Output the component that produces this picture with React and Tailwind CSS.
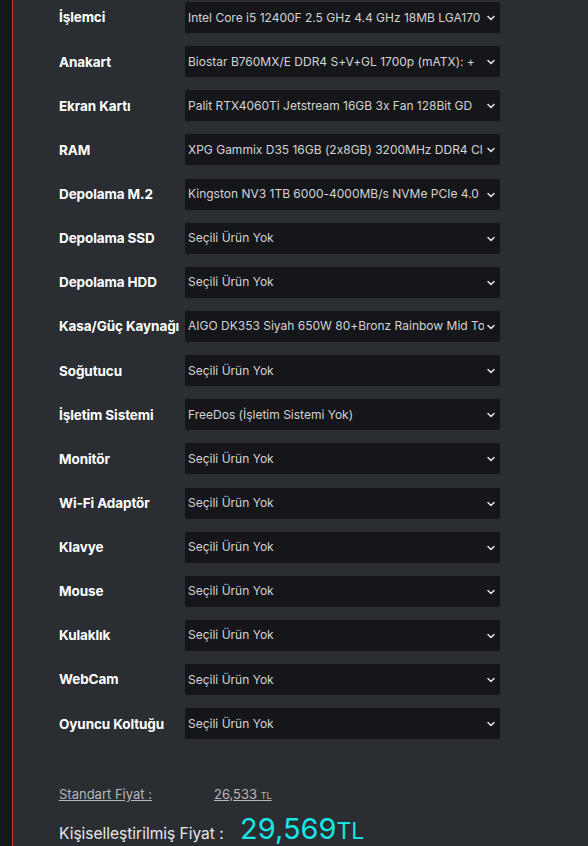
import React from 'react';
import { ChevronDown } from 'lucide-react';

const parts = [
  { label: 'İşlemci', value: 'Intel Core i5 12400F 2.5 GHz 4.4 GHz 18MB LGA170' },
  { label: 'Anakart', value: 'Biostar B760MX/E DDR4 S+V+GL 1700p (mATX): +' },
  { label: 'Ekran Kartı', value: 'Palit RTX4060Ti Jetstream 16GB 3x Fan 128Bit GD' },
  { label: 'RAM', value: 'XPG Gammix D35 16GB (2x8GB) 3200MHz DDR4 Cl' },
  { label: 'Depolama M.2', value: 'Kingston NV3 1TB 6000-4000MB/s NVMe PCIe 4.0' },
  { label: 'Depolama SSD', value: 'Seçili Ürün Yok' },
  { label: 'Depolama HDD', value: 'Seçili Ürün Yok' },
  { label: 'Kasa/Güç Kaynağı', value: 'AIGO DK353 Siyah 650W 80+Bronz Rainbow Mid To' },
  { label: 'Soğutucu', value: 'Seçili Ürün Yok' },
  { label: 'İşletim Sistemi', value: 'FreeDos (İşletim Sistemi Yok)' },
  { label: 'Monitör', value: 'Seçili Ürün Yok' },
  { label: 'Wi-Fi Adaptör', value: 'Seçili Ürün Yok' },
  { label: 'Klavye', value: 'Seçili Ürün Yok' },
  { label: 'Mouse', value: 'Seçili Ürün Yok' },
  { label: 'Kulaklık', value: 'Seçili Ürün Yok' },
  { label: 'WebCam', value: 'Seçili Ürün Yok' },
  { label: 'Oyuncu Koltuğu', value: 'Seçili Ürün Yok' },
];

const PartRow = ({ label, value }) => (
  <div className="flex items-center h-[31px]">
    <div className="w-[126px] shrink-0 text-[13.5px] font-bold text-white whitespace-nowrap tracking-[-0.1px]">{label}</div>
    <div className="relative w-[315px] h-full bg-[#151619] flex items-center pl-[3px] pr-[16px]">
      <span className="block overflow-hidden whitespace-nowrap text-[12px] text-[#d4d4d4]">{value}</span>
      <ChevronDown className="absolute right-[3px] top-[10px] text-[#e0e0e0]" size={12} strokeWidth={3.2} />
    </div>
  </div>
);

const App = () => {
  return (
    <div
      className="flex min-h-[846px] bg-[#2a2d32] [font-feature-settings:'calt'_0]"
      style={{ fontFamily: 'Inter, "Noto Sans", sans-serif' }}
    >
      {/* left dark strip */}
      <div className="w-[13px] shrink-0 bg-[#16171b] border-r border-[#c0392b]" />

      <div className="pl-[46px] pt-[2px] flex flex-col">
        <div className="flex flex-col gap-[13.15px]">
          {parts.map((p, i) => (
            <PartRow key={i} label={p.label} value={p.value} />
          ))}
        </div>

        {/* prices */}
        <div className="mt-[46px] flex items-baseline text-[13px] text-[#b8b8b8]">
          <span className="w-[155px] underline">Standart Fiyat :</span>
          <span className="underline">26,533 <span className="text-[9px]">TL</span></span>
        </div>
        <div className="mt-[9px] flex items-baseline">
          <span className="w-[181px] text-[15.5px] text-[#e8e8e8]">Kişiselleştirilmiş Fiyat :</span>
          <span className="text-[29px] text-[#16e6e6] leading-none">29,569<span className="text-[23px]">TL</span></span>
        </div>
      </div>
    </div>
  );
};

export default App;
